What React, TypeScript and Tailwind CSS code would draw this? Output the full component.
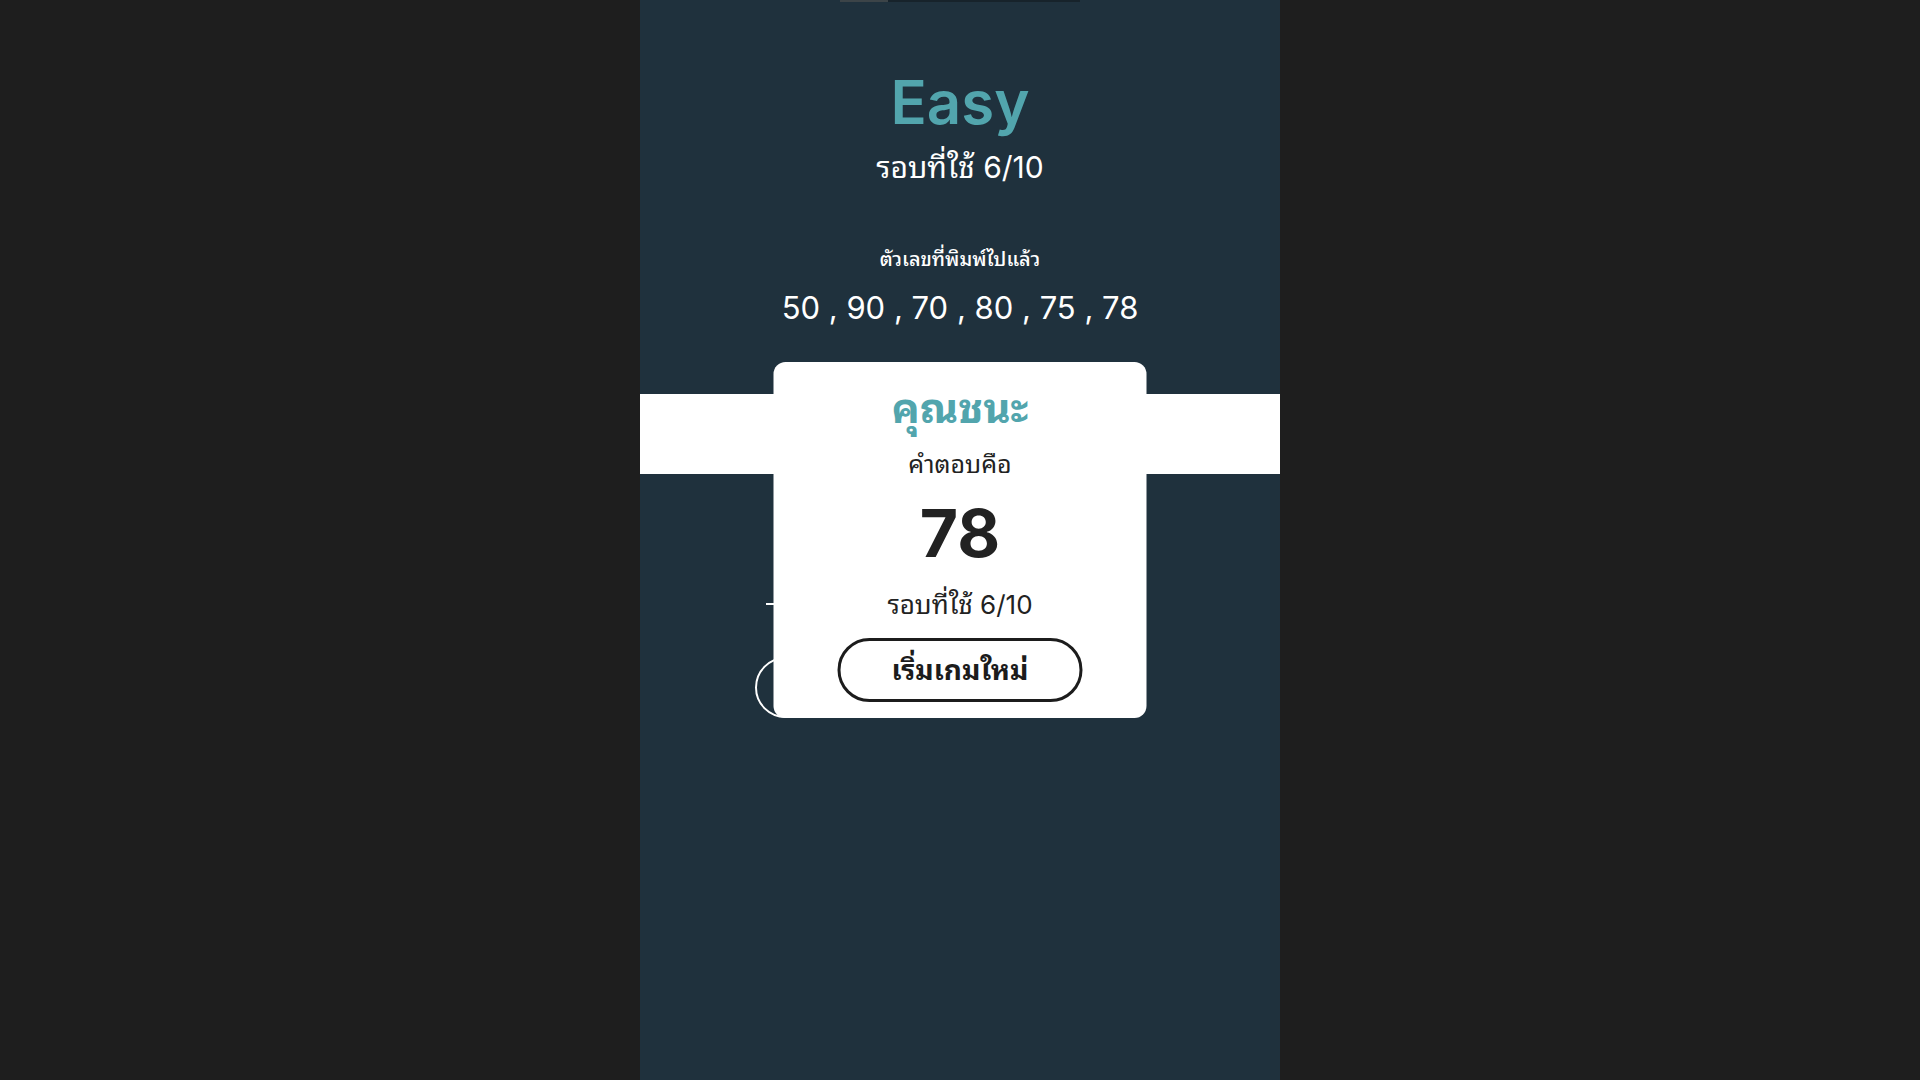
import React from 'react';

const guesses = [50, 90, 70, 80, 75, 78];
const FONT = {
  fontFamily: 'Inter, "Noto Sans Thai Looped", "Noto Sans Thai", "Noto Sans", sans-serif',
};

const ResultModal = ({ answer, used, max }: { answer: number; used: number; max: number }) => (
  <div className="absolute left-1/2 top-[362px] flex h-[356px] w-[373px] -translate-x-1/2 flex-col items-center rounded-xl bg-white pt-[20px]">
    <p className="text-[42px] font-bold leading-[52px] text-[#52a5ad]">คุณชนะ</p>
    <p className="mt-[14px] text-[25px] leading-[32px] text-[#222]">คำตอบคือ</p>
    <p className="mt-[17px] text-[66px] font-bold leading-[72px] text-[#222]">{answer}</p>
    <p className="mt-[20px] text-[26px] leading-[32px] text-[#222]">
      รอบที่ใช้ {used}/{max}
    </p>
    <button className="mt-[17px] flex h-[64px] w-[245px] items-center justify-center rounded-full border-[3px] border-[#1c1c1c] bg-white text-[28px] font-bold text-[#1c1c1c]">
      เริ่มเกมใหม่
    </button>
  </div>
);

export default function App() {
  return (
    <div className="min-h-screen bg-[#1e1e1e]" style={FONT}>
      <div className="relative mx-auto flex min-h-screen w-[640px] flex-col items-center bg-[#1f313d]">
        {/* progress */}
        <div className="h-[2px] w-[240px] bg-[#17232b]">
          <div className="h-full w-1/5 bg-[#3c4448]" />
        </div>

        <h1 className="mt-[70px] text-[60px] font-semibold leading-[60px] text-[#52a5ad]">Easy</h1>
        <p className="mt-[15px] text-[30px] leading-[40px] text-white">รอบที่ใช้ 6/10</p>

        <p className="mt-[58px] text-[20px] font-medium leading-[28px] text-white">ตัวเลขที่พิมพ์ไปแล้ว</p>
        <p className="mt-[15px] text-[31px] leading-[40px] text-white">{guesses.join(' , ')}</p>

        <div className="mt-[66px] h-[80px] w-full bg-white" />

        {/* input + submit, under the modal */}
        <div className="mt-[129px] flex w-[410px] flex-col items-start">
          <div className="ml-[11px] h-[2px] w-[360px] bg-white" />
          <div className="mt-[52px] h-[61px] w-[375px] rounded-full border-2 border-white" />
        </div>

        <ResultModal answer={78} used={6} max={10} />
      </div>
    </div>
  );
}
